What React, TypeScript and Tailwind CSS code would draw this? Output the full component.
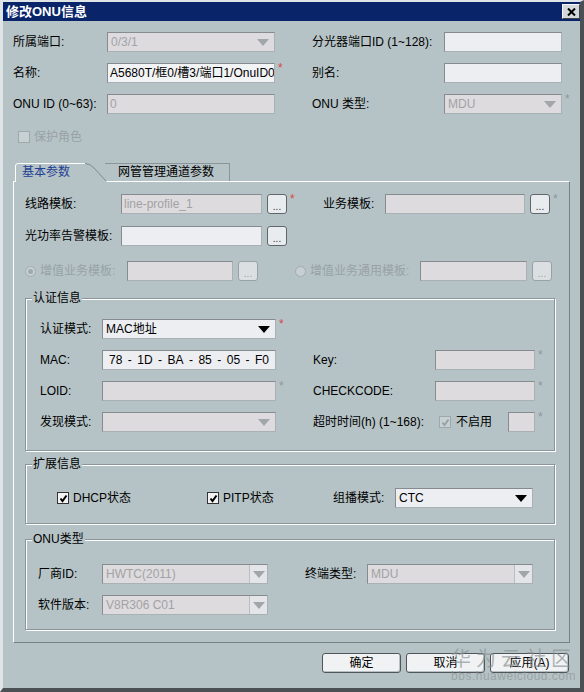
import React from 'react';

// Classic Windows-style "修改ONU信息" dialog

type BoxProps = {
  className?: string;
  disabled?: boolean;
  children?: React.ReactNode;
};

function Box({ className = '', disabled = false, children }: BoxProps) {
  return (
    <div
      className={`h-[20px] flex items-center px-[2px] border border-[#858b8f] border-b-[#a9b1b4] border-r-[#a9b1b4] whitespace-nowrap overflow-hidden ${
        disabled ? 'bg-[#dddbde] text-[#a2a2a4]' : 'bg-[#eceef1] text-black'
      } ${className}`}
    >
      {children}
    </div>
  );
}

function Arrow({ dark }: { dark?: boolean }) {
  return (
    <svg width="12" height="7" viewBox="0 0 12 7">
      <path d="M0 0 H12 L6 7 Z" fill={dark ? '#000000' : '#a1a6a9'} />
    </svg>
  );
}

function Select({
  className = '',
  disabled = false,
  split = false,
  value = '',
}: {
  className?: string;
  disabled?: boolean;
  split?: boolean;
  value?: string;
}) {
  return (
    <div
      className={`h-[20px] flex items-center border border-[#858b8f] border-b-[#a9b1b4] border-r-[#a9b1b4] whitespace-nowrap overflow-hidden ${
        disabled ? 'bg-[#dddbde] text-[#a2a2a4]' : 'bg-[#eceef1] text-black'
      } ${className}`}
    >
      <span className="flex-1 pl-[3px]">{value}</span>
      {split ? (
        <span className="w-[18px] h-full flex items-center justify-center border-l border-[#b9bec1] bg-[#e4e5e8]">
          <Arrow />
        </span>
      ) : (
        <span className="w-[22px] flex items-center justify-center">
          <Arrow dark={!disabled} />
        </span>
      )}
    </div>
  );
}

function Dots({ disabled = false }: { disabled?: boolean }) {
  return (
    <div
      className={`ml-[5px] w-[20px] h-[20px] rounded-[3px] border flex items-end justify-center text-[10px] leading-[13px] ${
        disabled ? 'border-[#98a1a5] bg-[#dcdfe1] text-[#9aa0a3]' : 'border-[#5f676b] bg-[#e9ecee] text-[#333]'
      }`}
    >
      ...
    </div>
  );
}

function Star({ red = false }: { red?: boolean }) {
  return (
    <span
      className={`ml-[3px] self-start -mt-[1px] text-[12px] leading-none ${red ? 'text-[#d8473f]' : 'text-[#8d979a]'}`}
    >
      *
    </span>
  );
}

function Check({ checked = false, disabled = false }: { checked?: boolean; disabled?: boolean }) {
  return (
    <span
      className={`w-[12px] h-[12px] border flex items-center justify-center shrink-0 ${
        disabled ? 'border-[#9ea7aa] bg-[#c7d0d2]' : 'border-[#333] bg-[#f3f3f3]'
      }`}
    >
      {checked && (
        <svg width="9" height="9" viewBox="0 0 9 9">
          <path
            d="M1.5 4.5 L3.5 7 L7.5 1.5"
            stroke={disabled ? '#9aa2a5' : '#000'}
            strokeWidth="2"
            fill="none"
          />
        </svg>
      )}
    </span>
  );
}

function Radio({ checked = false }: { checked?: boolean }) {
  return (
    <span className="w-[11px] h-[11px] rounded-full border border-[#a3acaf] bg-[#c6cfd1] flex items-center justify-center shrink-0">
      {checked && <span className="w-[5px] h-[5px] rounded-full bg-[#a0a9ac]" />}
    </span>
  );
}

function Group({ title, className = '', children }: { title: string; className?: string; children: React.ReactNode }) {
  return (
    <fieldset
      className={`w-[530px] border border-[#8b969a] shadow-[inset_1px_1px_0_#ffffff,1px_1px_0_#ffffff] ${className}`}
    >
      <legend className="ml-[6px] px-[1px] leading-[14px] bg-[#b6c3c6]">{title}</legend>
      {children}
    </fieldset>
  );
}

export default function App() {
  return (
    <div className="relative w-[584px] h-[692px] bg-[#b6c3c6] border-t-[2px] border-l-[3px] border-t-[#dfe5e7] border-l-[#dfe5e7] border-r-[4px] border-b-[4px] border-r-[#4a5053] border-b-[#4a5053] flex flex-col font-['Liberation_Sans','Noto_Sans_CJK_SC',sans-serif] text-[12px] text-black overflow-hidden">
      {/* title bar */}
      <div className="h-[19px] bg-[#0a246a] flex items-center justify-between pl-[3px]">
        <span className="text-white font-bold text-[13px] leading-none">修改ONU信息</span>
        <div className="w-[18px] h-[15px] bg-[#d4d8da] border border-[#f4f6f7] border-r-[#404548] border-b-[#404548] flex items-center justify-center">
          <svg width="9" height="8" viewBox="0 0 9 8">
            <path d="M1 0.5 L8 7.5 M8 0.5 L1 7.5" stroke="#000" strokeWidth="2" />
          </svg>
        </div>
      </div>

      {/* top form */}
      <div className="mt-[11px] pl-[10px] flex flex-col gap-[11px]">
        <div className="flex items-center h-[20px]">
          <div className="w-[299px] flex items-center">
            <span className="w-[94px]">所属端口:</span>
            <Select className="w-[168px]" disabled value="0/3/1" />
          </div>
          <span className="w-[132px]">分光器端口ID (1~128):</span>
          <Box className="w-[118px]" />
        </div>
        <div className="flex items-center h-[20px]">
          <div className="w-[299px] flex items-center">
            <span className="w-[94px]">名称:</span>
            <Box className="w-[168px] bg-[#f2f3f5]">A5680T/框0/槽3/端口1/OnuID0</Box>
            <Star red />
          </div>
          <span className="w-[132px]">别名:</span>
          <Box className="w-[118px]" />
        </div>
        <div className="flex items-center h-[20px]">
          <div className="w-[299px] flex items-center">
            <span className="w-[94px]">ONU ID (0~63):</span>
            <Box className="w-[168px]" disabled>
              0
            </Box>
          </div>
          <span className="w-[132px]">ONU 类型:</span>
          <Select className="w-[118px]" disabled value="MDU" />
          <Star />
        </div>
      </div>

      <div className="mt-[17px] pl-[15px] h-[12px] flex items-center gap-[4px] text-[#98a2a5]">
        <Check disabled />
        <span>保护角色</span>
      </div>

      {/* tabs */}
      <div className="mt-[20px] ml-[12px] h-[18px] flex items-end">
        <div className="relative w-[90px] h-[18px] z-10">
          <svg className="absolute left-0 top-0" width="92" height="19" viewBox="0 0 92 19">
            <path d="M0.5 19 V3 Q0.5 0.5 3 0.5 H70 Q75 0.5 79 5 L92 19 Z" fill="#b6c3c6" />
            <path d="M0.5 19 V3 Q0.5 0.5 3 0.5 H70" stroke="#ffffff" fill="none" />
            <path d="M70 0.5 Q75 0.5 79 5 L91 18" stroke="#7f8a8e" fill="none" />
          </svg>
          <span className="relative pl-[7px] leading-[18px] text-[#1e3f94]">基本参数</span>
        </div>
        <div className="w-[125px] h-[18px] border-t border-r border-[#8a9599] pl-[13px] leading-[17px]">
          网管管理通道参数
        </div>
      </div>

      {/* tab panel */}
      <div className="ml-[10px] w-[557px] h-[462px] border border-t-white border-l-white border-r-[#768185] border-b-[#768185] pt-[12px] pl-[11px]">
        <div className="flex items-center h-[20px]">
          <div className="w-[298px] flex items-center">
            <span className="w-[96px]">线路模板:</span>
            <Box className="w-[141px]" disabled>
              line-profile_1
            </Box>
            <Dots />
            <Star red />
          </div>
          <span className="w-[62px]">业务模板:</span>
          <Box className="w-[140px]" disabled />
          <Dots />
          <Star />
        </div>
        <div className="mt-[12px] flex items-center h-[20px]">
          <span className="w-[96px]">光功率告警模板:</span>
          <Box className="w-[141px]" />
          <Dots />
        </div>
        <div className="mt-[15px] flex items-center h-[20px] text-[#98a2a5]">
          <div className="w-[270px] flex items-center">
            <span className="w-[102px] flex items-center gap-[4px]">
              <Radio checked />
              增值业务模板:
            </span>
            <Box className="w-[106px]" disabled />
            <Dots disabled />
          </div>
          <span className="w-[125px] flex items-center gap-[4px]">
            <Radio />
            增值业务通用模板:
          </span>
          <Box className="w-[107px]" disabled />
          <Dots disabled />
        </div>

        <Group title="认证信息" className="mt-[10px] pt-[14px] pb-[18px]">
          <div className="pl-[14px] flex flex-col gap-[11px]">
            <div className="flex items-center h-[20px]">
              <div className="w-[273px] flex items-center">
                <span className="w-[62px]">认证模式:</span>
                <Select className="w-[174px]" value="MAC地址" />
                <Star red />
              </div>
            </div>
            <div className="flex items-center h-[20px]">
              <div className="w-[273px] flex items-center">
                <span className="w-[62px]">MAC:</span>
                <Box className="w-[174px] px-[6px] justify-between">
                  {['78', '-', '1D', '-', 'BA', '-', '85', '-', '05', '-', 'F0'].map((s, i) => (
                    <span key={i}>{s}</span>
                  ))}
                </Box>
              </div>
              <span className="w-[122px]">Key:</span>
              <Box className="w-[100px]" disabled />
              <Star />
            </div>
            <div className="flex items-center h-[20px]">
              <div className="w-[273px] flex items-center">
                <span className="w-[62px]">LOID:</span>
                <Box className="w-[174px]" disabled />
                <Star />
              </div>
              <span className="w-[122px]">CHECKCODE:</span>
              <Box className="w-[100px]" disabled />
              <Star />
            </div>
            <div className="flex items-center h-[20px]">
              <div className="w-[273px] flex items-center">
                <span className="w-[62px]">发现模式:</span>
                <Select className="w-[174px]" disabled />
              </div>
              <span className="w-[122px]">超时时间(h) (1~168):</span>
              <div className="w-[100px] flex items-center">
                <span className="ml-[4px]">
                  <Check checked disabled />
                </span>
                <span className="ml-[5px] flex-1">不启用</span>
                <Box className="w-[27px]" disabled />
              </div>
              <Star />
            </div>
          </div>
        </Group>

        <Group title="扩展信息" className="mt-[6px] pt-[17px] pb-[15px]">
          <div className="pl-[31px] flex items-center h-[20px]">
            <span className="w-[150px] flex items-center gap-[4px]">
              <Check checked />
              DHCP状态
            </span>
            <span className="w-[126px] flex items-center gap-[4px]">
              <Check checked />
              PITP状态
            </span>
            <span className="w-[62px]">组播模式:</span>
            <Select className="w-[138px]" value="CTC" />
          </div>
        </Group>

        <Group title="ONU类型" className="mt-[8px] pt-[18px] pb-[14px]">
          <div className="pl-[12px] flex flex-col gap-[11px]">
            <div className="flex items-center h-[20px]">
              <div className="w-[267px] flex items-center">
                <span className="w-[64px]">厂商ID:</span>
                <Select className="w-[166px]" disabled split value="HWTC(2011)" />
              </div>
              <span className="w-[62px]">终端类型:</span>
              <Select className="w-[166px]" disabled split value="MDU" />
            </div>
            <div className="flex items-center h-[20px]">
              <span className="w-[64px]">软件版本:</span>
              <Select className="w-[166px]" disabled split value="V8R306 C01" />
            </div>
          </div>
        </Group>
      </div>

      {/* buttons */}
      <div className="mt-[10px] pr-[11px] flex justify-end gap-[5px]">
        {['确定', '取消', '应用(A)'].map((t) => (
          <div
            key={t}
            className="w-[79px] h-[20px] rounded-[3px] border border-[#4f5659] bg-[#f1f2f3] shadow-[inset_-1px_-1px_0_#b9c0c3] flex items-center justify-center"
          >
            {t}
          </div>
        ))}
      </div>

      {/* watermark */}
      <div className="absolute right-[4px] bottom-[6px] flex flex-col items-end pointer-events-none text-[#8c9396]/70">
        <span className="text-[20px] leading-[22px] tracking-[5px]">华为云社区</span>
        <span className="text-[12px] leading-[12px] tracking-[0.5px]">bbs.huaweicloud.com</span>
      </div>
    </div>
  );
}
